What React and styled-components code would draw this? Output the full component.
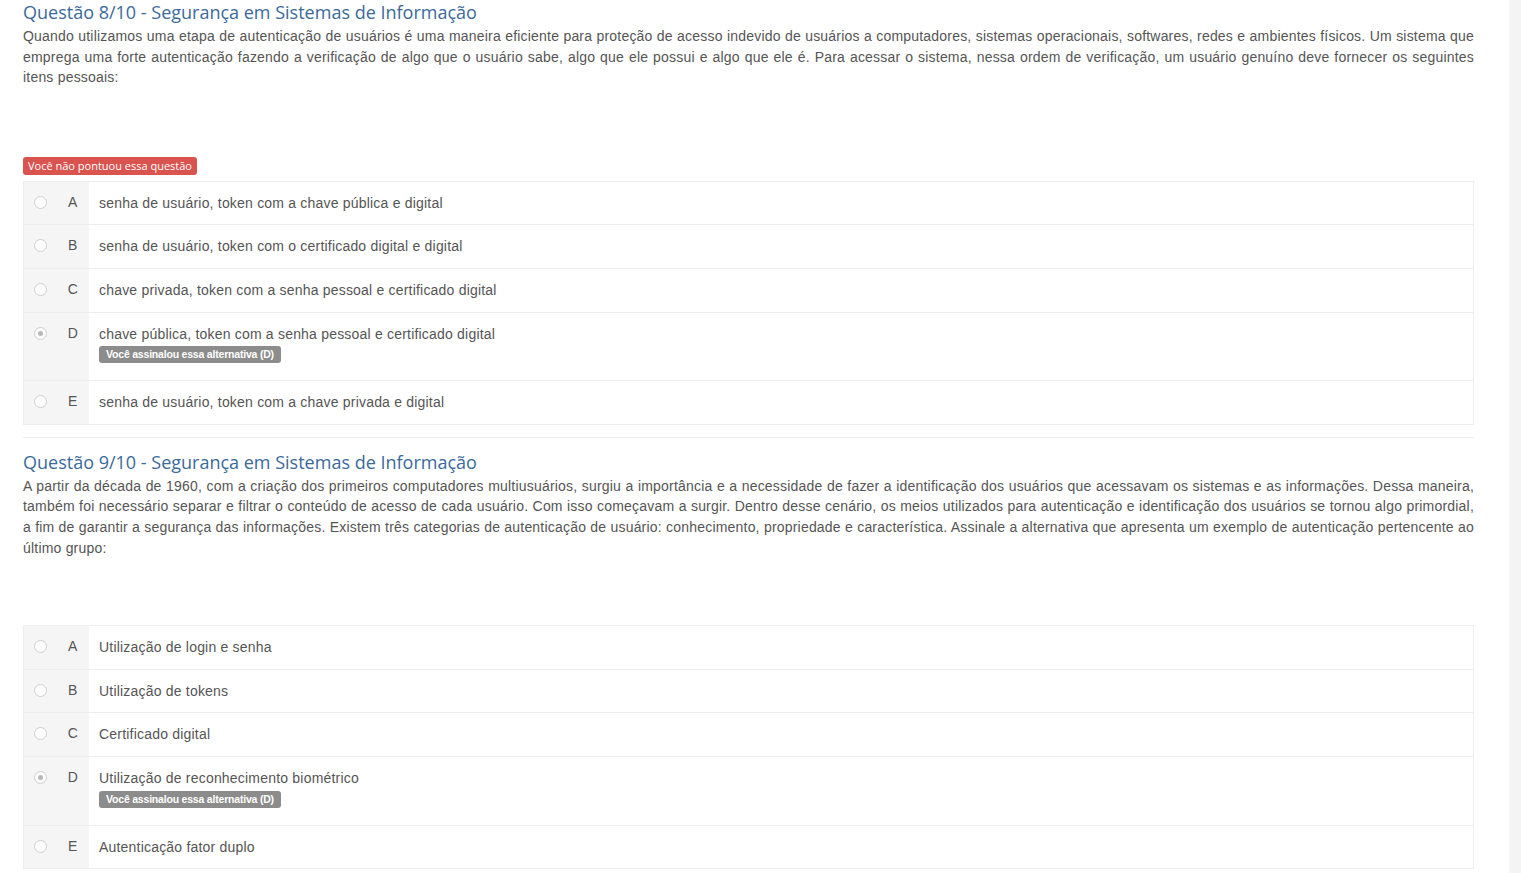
import React from "react";
import styled, { createGlobalStyle } from "styled-components";

const Global = createGlobalStyle`
  html, body { margin: 0; padding: 0; background: #fff; }
  body { font-family: "Liberation Sans", Arial, sans-serif; color: #555; }
  * { box-sizing: border-box; }
`;

const Page = styled.div`
  display: flex;
  min-height: 873px;
`;

const Main = styled.main`
  flex: 1;
  padding: 0 35px 0 23px;
  min-width: 0;
`;

const SideStrip = styled.div`
  width: 12px;
  flex: none;
  background: #f4f4f4;
`;

const Question = styled.section``;

const Divider = styled.hr`
  border: 0;
  border-top: 1px solid #eee;
  margin: 12px 0 12px;
`;

const Title = styled.h3`
  margin: 0;
  font-family: "Open Sans", "Liberation Sans", sans-serif;
  font-weight: 400;
  font-size: 18px;
  line-height: 24px;
  color: #3b6a9b;
`;

const Statement = styled.p`
  margin: 2px 0 0;
  font-size: 14px;
  letter-spacing: 0.2px;
  line-height: 20.6px;
  text-align: justify;
  color: #555;
`;

const Spacer = styled.div`
  height: ${(p) => p.$h}px;
`;

const ScoreBadge = styled.span`
  display: inline-block;
  background: #d9534f;
  color: #fff;
  font-family: "Open Sans", "Liberation Sans", sans-serif;
  font-size: 11px;
  line-height: 18px;
  height: 18px;
  padding: 0 5px;
  border-radius: 3px;
  margin-bottom: 6px;
  vertical-align: top;
`;

const Options = styled.div`
  border: 1px solid #eee;
  border-bottom: 0;
`;

const Row = styled.div`
  display: flex;
  border-bottom: 1px solid #eee;
`;

const Side = styled.div`
  width: 65px;
  flex: none;
  background: #f5f5f5;
  display: flex;
  align-items: flex-start;
  padding-top: 14px;
`;

const RadioWrap = styled.span`
  width: 33px;
  display: flex;
  justify-content: center;
`;

const Radio = styled.span`
  width: 13px;
  height: 13px;
  border-radius: 50%;
  border: 1px solid #cfcfcf;
  background: #fcfcfc;
  display: flex;
  align-items: center;
  justify-content: center;
  &::after {
    content: "";
    width: 5px;
    height: 5px;
    border-radius: 50%;
    background: ${(p) => (p.$checked ? "#b8b8b8" : "transparent")};
  }
`;

const Letter = styled.span`
  width: 33px;
  text-align: center;
  font-size: 14px;
  line-height: 13px;
  color: #555;
`;

const Body = styled.div`
  flex: 1;
  padding: 11px 10px ${(p) => (p.$marked ? "17px" : "11px")};
  font-size: 14px;
  letter-spacing: 0.2px;
  line-height: 20.6px;
  color: #555;
`;

const MarkBadge = styled.span`
  display: inline-block;
  margin-top: 2px;
  background: #8c8c8c;
  color: #fff;
  font-size: 10.5px;
  font-weight: 700;
  letter-spacing: -0.2px;
  line-height: 16px;
  height: 17px;
  padding: 0 7px;
  border-radius: 3px;
  vertical-align: top;
`;

const BadgeLine = styled.div`
  line-height: 0;
`;

const questions = [
  {
    title: "Questão 8/10 - Segurança em Sistemas de Informação",
    text:
      "Quando utilizamos uma etapa de autenticação de usuários é uma maneira eficiente para proteção de acesso indevido de usuários a computadores, sistemas operacionais, softwares, redes e ambientes físicos. Um sistema que emprega uma forte autenticação fazendo a verificação de algo que o usuário sabe, algo que ele possui e algo que ele é. Para acessar o sistema, nessa ordem de verificação, um usuário genuíno deve fornecer os seguintes itens pessoais:",
    missed: true,
    gap: 69,
    marked: "D",
    options: [
      ["A", "senha de usuário, token com a chave pública e digital"],
      ["B", "senha de usuário, token com o certificado digital e digital"],
      ["C", "chave privada, token com a senha pessoal e certificado digital"],
      ["D", "chave pública, token com a senha pessoal e certificado digital"],
      ["E", "senha de usuário, token com a chave privada e digital"],
    ],
  },
  {
    title: "Questão 9/10 - Segurança em Sistemas de Informação",
    text:
      "A partir da década de 1960, com a criação dos primeiros computadores multiusuários, surgiu a importância e a necessidade de fazer a identificação dos usuários que acessavam os sistemas e as informações. Dessa maneira, também foi necessário separar e filtrar o conteúdo de acesso de cada usuário. Com isso começavam a surgir. Dentro desse cenário, os meios utilizados para autenticação e identificação dos usuários se tornou algo primordial, a fim de garantir a segurança das informações. Existem três categorias de autenticação de usuário: conhecimento, propriedade e característica. Assinale a alternativa que apresenta um exemplo de autenticação pertencente ao último grupo:",
    missed: false,
    gap: 67,
    marked: "D",
    options: [
      ["A", "Utilização de login e senha"],
      ["B", "Utilização de tokens"],
      ["C", "Certificado digital"],
      ["D", "Utilização de reconhecimento biométrico"],
      ["E", "Autenticação fator duplo"],
    ],
  },
];

function QuestionBlock({ q }) {
  return (
    <Question>
      <Title>{q.title}</Title>
      <Statement>{q.text}</Statement>
      <Spacer $h={q.gap} />
      {q.missed && <ScoreBadge>Você não pontuou essa questão</ScoreBadge>}
      <Options>
        {q.options.map(([letter, label]) => {
          const marked = letter === q.marked;
          return (
            <Row key={letter}>
              <Side>
                <RadioWrap>
                  <Radio $checked={marked} />
                </RadioWrap>
                <Letter>{letter}</Letter>
              </Side>
              <Body $marked={marked}>
                {label}
                {marked && (
                  <BadgeLine>
                    <MarkBadge>Você assinalou essa alternativa ({letter})</MarkBadge>
                  </BadgeLine>
                )}
              </Body>
            </Row>
          );
        })}
      </Options>
    </Question>
  );
}

export default function App() {
  return (
    <Page>
      <Global />
      <Main>
        <QuestionBlock q={questions[0]} />
        <Divider />
        <QuestionBlock q={questions[1]} />
      </Main>
      <SideStrip />
    </Page>
  );
}
